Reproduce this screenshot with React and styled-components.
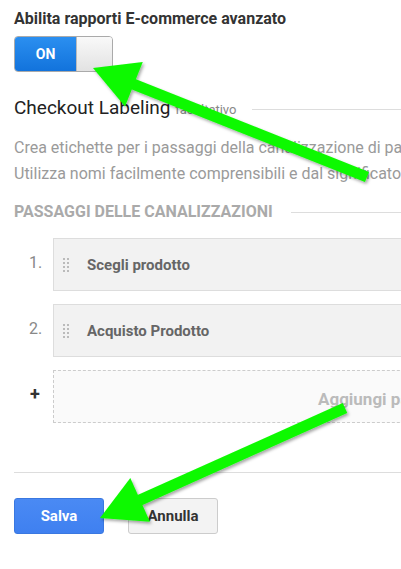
import React from "react";
import styled, { createGlobalStyle } from "styled-components";

const GlobalStyle = createGlobalStyle`
  html, body {
    margin: 0;
    padding: 0;
    background: #fff;
    overflow: hidden;
  }
  body {
    font-family: Roboto, "Liberation Sans", Arial, sans-serif;
  }
`;

// Arrow helper: shaft + triangular head, tail -> tip
const Arrow = ({ from, to, head = 44, half = 24, width = 11 }) => {
  const dx = to[0] - from[0];
  const dy = to[1] - from[1];
  const len = Math.hypot(dx, dy);
  const ux = dx / len;
  const uy = dy / len;
  const bx = to[0] - ux * head;
  const by = to[1] - uy * head;
  const px = -uy * half;
  const py = ux * half;
  const pts = `${to[0]},${to[1]} ${bx + px},${by + py} ${bx - px},${by - py}`;
  return (
    <g filter="url(#shadow)">
      <line
        x1={from[0]}
        y1={from[1]}
        x2={bx + ux * 4}
        y2={by + uy * 4}
        stroke="#0df900"
        strokeWidth={width}
      />
      <polygon points={pts} fill="#0df900" />
    </g>
  );
};

const steps = ["Scegli prodotto", "Acquisto Prodotto"];

const App = () => {
  return (
    <>
      <GlobalStyle />
      <Page>
        <Title>Abilita rapporti E-commerce avanzato</Title>
        <Toggle>
          <ToggleOn>ON</ToggleOn>
          <ToggleKnob />
        </Toggle>

        <SectionHead>
          <h2>
            Checkout Labeling <small>facoltativo</small>
          </h2>
          <Rule />
        </SectionHead>

        <Description>
          <p>Crea etichette per i passaggi della canalizzazione di pagamento.</p>
          <p>Utilizza nomi facilmente comprensibili e dal significato chiaro.</p>
        </Description>

        <SubHead>
          <h3>Passaggi delle canalizzazioni</h3>
          <Rule />
        </SubHead>

        <Steps>
          {steps.map((s, i) => (
            <StepRow key={s}>
              <StepNum>{i + 1}.</StepNum>
              <StepBox>
                <Handle />
                <span>{s}</span>
              </StepBox>
            </StepRow>
          ))}
          <StepRow>
            <StepNum $plus>+</StepNum>
            <StepBox $add>
              <span>Aggiungi passaggio della canalizzazione</span>
            </StepBox>
          </StepRow>
        </Steps>

        <Divider />

        <Buttons>
          <Button $primary>Salva</Button>
          <Button>Annulla</Button>
        </Buttons>
      </Page>

      <Overlay width="401" height="569" viewBox="0 0 401 569">
        <defs>
          <filter id="shadow" x="-20%" y="-20%" width="140%" height="140%">
            <feDropShadow dx="1.5" dy="2" stdDeviation="1.5" floodColor="#000" floodOpacity="0.35" />
          </filter>
        </defs>
        <Arrow from={[367, 177]} to={[93, 68]} />
        <Arrow from={[345, 408]} to={[100, 518]} />
      </Overlay>
    </>
  );
};

const Page = styled.div`
  width: 640px;
  padding: 9px 0 0 14px;
`;

const Title = styled.div`
  font-size: 16px;
  font-weight: 700;
  color: #333;
  line-height: 19px;
`;

const Toggle = styled.div`
  display: flex;
  width: 99px;
  height: 36px;
  margin-top: 8px;
  border-radius: 4px;
  overflow: hidden;
  border: 1px solid #aaa;
  box-sizing: border-box;
`;

const ToggleOn = styled.div`
  width: 61px;
  display: flex;
  align-items: center;
  justify-content: center;
  background: linear-gradient(#2b8ff0, #1273dc);
  color: #fff;
  font-weight: 700;
  font-size: 14px;
`;

const ToggleKnob = styled.div`
  flex: 1;
  background: linear-gradient(#f9f9f9, #e2e2e2);
  border-left: 1px solid #bbb;
`;

const Rule = styled.div`
  flex: 1;
  height: 1px;
  background: #ddd;
`;

const SectionHead = styled.div`
  display: flex;
  align-items: center;
  gap: 16px;
  margin-top: 23px;
  h2 {
    margin: 0;
    font-size: 19px;
    font-weight: 400;
    color: #222;
    line-height: 26px;
    white-space: nowrap;
  }
  small {
    font-size: 13px;
    color: #888;
  }
`;

const Description = styled.div`
  margin-top: 12px;
  p {
    margin: 0;
    font-size: 16px;
    line-height: 26px;
    color: #9a9a9a;
    white-space: nowrap;
  }
`;

const SubHead = styled.div`
  display: flex;
  align-items: center;
  gap: 18px;
  margin-top: 15px;
  h3 {
    margin: 0;
    font-size: 16px;
    font-weight: 700;
    text-transform: uppercase;
    color: #aaa;
    line-height: 20px;
    white-space: nowrap;
  }
`;

const Steps = styled.div`
  display: flex;
  flex-direction: column;
  gap: 13px;
  margin-top: 16px;
`;

const StepRow = styled.div`
  display: flex;
  align-items: center;
`;

const StepNum = styled.div`
  width: 39px;
  padding-left: ${(p) => (p.$plus ? "16px" : "15px")};
  box-sizing: border-box;
  font-size: ${(p) => (p.$plus ? "18px" : "16px")};
  font-weight: ${(p) => (p.$plus ? 700 : 400)};
  color: ${(p) => (p.$plus ? "#333" : "#888")};
  align-self: flex-start;
  margin-top: ${(p) => (p.$plus ? "13px" : "15px")};
`;

const StepBox = styled.div`
  flex: 1;
  height: 53px;
  box-sizing: border-box;
  display: flex;
  align-items: center;
  padding-left: ${(p) => (p.$add ? "264px" : "8px")};
  background: ${(p) => (p.$add ? "#fafafa" : "#f2f2f2")};
  border: 1px ${(p) => (p.$add ? "dashed #ccc" : "solid #ddd")};
  border-right: none;
  span {
    font-size: ${(p) => (p.$add ? "17px" : "15px")};
    font-weight: 700;
    color: ${(p) => (p.$add ? "#bbb" : "#666")};
    white-space: nowrap;
    margin-top: ${(p) => (p.$add ? "4px" : "0")};
  }
`;

const Handle = styled.div`
  width: 9px;
  height: 16px;
  margin-right: 16px;
  background-image: radial-gradient(circle, #bbb 1px, transparent 1.2px);
  background-size: 4px 4px;
  background-position: 0 0;
`;

const Divider = styled.div`
  height: 1px;
  background: #ddd;
  margin-top: 49px;
`;

const Buttons = styled.div`
  display: flex;
  gap: 24px;
  margin-top: 25px;
`;

const Button = styled.button`
  width: 90px;
  height: 36px;
  border-radius: 3px;
  font-family: Roboto, "Liberation Sans", Arial, sans-serif;
  font-size: 15px;
  font-weight: 700;
  border: 1px solid ${(p) => (p.$primary ? "#3a78e0" : "#ccc")};
  background: ${(p) => (p.$primary ? "linear-gradient(#4a8af4, #3f80f0)" : "#f3f3f3")};
  color: ${(p) => (p.$primary ? "#fff" : "#333")};
`;

const Overlay = styled.svg`
  position: absolute;
  top: 0;
  left: 0;
  pointer-events: none;
`;

export default App;
